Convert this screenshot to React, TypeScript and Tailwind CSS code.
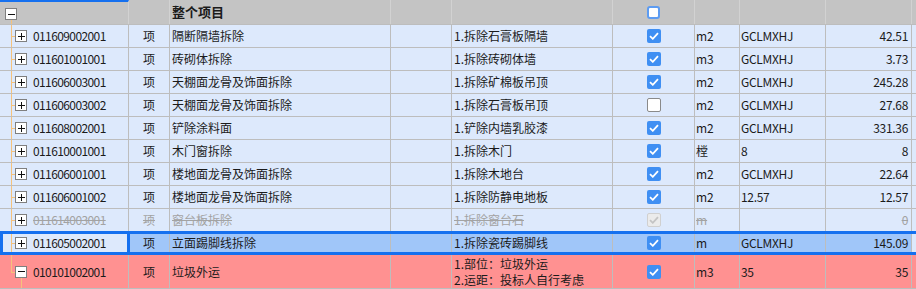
import React from "react";

type Row = {
  code: string;
  name: string;
  feat: string[];
  check: "on" | "off" | "disabled";
  unit: string;
  expr: string;
  qty: string;
  kind?: "strike" | "selected" | "red";
};

const ROWS: Row[] = [
  { code: "011609002001", name: "隔断隔墙拆除", feat: ["1.拆除石膏板隔墙"], check: "on", unit: "m2", expr: "GCLMXHJ", qty: "42.51" },
  { code: "011601001001", name: "砖砌体拆除", feat: ["1.拆除砖砌体墙"], check: "on", unit: "m3", expr: "GCLMXHJ", qty: "3.73" },
  { code: "011606003001", name: "天棚面龙骨及饰面拆除", feat: ["1.拆除矿棉板吊顶"], check: "on", unit: "m2", expr: "GCLMXHJ", qty: "245.28" },
  { code: "011606003002", name: "天棚面龙骨及饰面拆除", feat: ["1.拆除石膏板吊顶"], check: "off", unit: "m2", expr: "GCLMXHJ", qty: "27.68" },
  { code: "011608002001", name: "铲除涂料面", feat: ["1.铲除内墙乳胶漆"], check: "on", unit: "m2", expr: "GCLMXHJ", qty: "331.36" },
  { code: "011610001001", name: "木门窗拆除", feat: ["1.拆除木门"], check: "on", unit: "樘", expr: "8", qty: "8" },
  { code: "011606001001", name: "楼地面龙骨及饰面拆除", feat: ["1.拆除木地台"], check: "on", unit: "m2", expr: "GCLMXHJ", qty: "22.64" },
  { code: "011606001002", name: "楼地面龙骨及饰面拆除", feat: ["1.拆除防静电地板"], check: "on", unit: "m2", expr: "12.57", qty: "12.57" },
  { code: "011614003001", name: "窗台板拆除", feat: ["1.拆除窗台石"], check: "disabled", unit: "m", expr: "", qty: "0", kind: "strike" },
  { code: "011605002001", name: "立面踢脚线拆除", feat: ["1.拆除瓷砖踢脚线"], check: "on", unit: "m", expr: "GCLMXHJ", qty: "145.09", kind: "selected" },
  { code: "010101002001", name: "垃圾外运", feat: ["1.部位：垃圾外运", "2.运距：投标人自行考虑"], check: "on", unit: "m3", expr: "35", qty: "35", kind: "red" },
];

const GRID =
  "grid grid-cols-[129px_41px_221px_61px_161px_82px_45px_86px_86px_1fr]";
const FONT = "font-['Noto_Sans_CJK_SC','Noto_Sans',sans-serif]";

function ToggleBox({ open }: { open: boolean }) {
  return (
    <span className="relative z-10 flex h-3 w-3 shrink-0 items-center justify-center border border-[#7f7f7f] bg-white">
      <span className="absolute h-px w-[7px] bg-[#111]" />
      {!open && <span className="absolute h-[7px] w-px bg-[#111]" />}
    </span>
  );
}

function Check({ state }: { state: Row["check"] | "header" }) {
  if (state === "header")
    return <span className="h-[13px] w-[13px] rounded-[3px] border-2 border-[#5d9cf2] bg-white" />;
  if (state === "off")
    return <span className="h-[14px] w-[14px] rounded-[2px] border border-[#8a8a8a] bg-white" />;
  const disabled = state === "disabled";
  return (
    <span
      className={
        "flex h-[14px] w-[14px] items-center justify-center rounded-[2px] " +
        (disabled ? "border border-[#d0d0d0] bg-[#ebebeb]" : "bg-[#3f8ff3]")
      }
    >
      <svg width="10" height="8" viewBox="0 0 10 8">
        <path
          d="M1 4.2 L3.8 6.8 L9 1.2"
          fill="none"
          stroke={disabled ? "#c4c4c4" : "#fff"}
          strokeWidth="1.8"
        />
      </svg>
    </span>
  );
}

function Cell({
  children,
  className = "",
}: {
  children?: React.ReactNode;
  className?: string;
}) {
  return (
    <div className={"flex items-center border-r border-[#bdbdbd] " + className}>
      {children}
    </div>
  );
}

function DataRow({ r, last }: { r: Row; last: boolean }) {
  const bg =
    r.kind === "red" ? "bg-[#ff9191]" : r.kind === "selected" ? "bg-[#a0c6f9]" : "bg-[#dde9fc]";
  const txt = r.kind === "strike" ? "text-[#a3a3a3] line-through" : "text-[#1b1b1b]";
  const h = r.kind === "red" ? "h-[34px]" : "h-[23px]";
  const col1Bg = r.kind === "red" ? "bg-[#ff9191]" : "bg-[#dde9fc]";
  return (
    <div className={GRID + " relative border-b border-[#bdbdbd] leading-[16px] " + h + " " + txt}>
      <Cell className={"relative pl-[15px] " + col1Bg}>
        {/* tree connectors */}
        <span className={"absolute left-[11px] top-0 w-px bg-[#f5c27c] " + (last ? "h-1/2" : "h-full")} />
        <span className="absolute left-[11px] top-1/2 h-px w-1 bg-[#f5c27c]" />
        {last && <span className="absolute bottom-0 left-[21px] top-[22px] w-px bg-[#f5c27c]" />}
        <ToggleBox open={last} />
        <span className="ml-[6px] tracking-[-0.6px]">{r.code}</span>
      </Cell>
      <Cell className={"justify-center " + bg}>项</Cell>
      <Cell className={"pl-[2px] " + bg}>{r.name}</Cell>
      <Cell className={bg} />
      <Cell className={"pl-[2px] " + bg}>
        <div className="flex flex-col">
          {r.feat.map((f) => (
            <span key={f}>{f}</span>
          ))}
        </div>
      </Cell>
      <Cell className={"justify-center " + bg}>
        <Check state={r.check} />
      </Cell>
      <Cell className={"pl-[1px] " + bg}>{r.unit}</Cell>
      <Cell className={"pl-[1px] tracking-[-0.3px] " + bg}>{r.expr}</Cell>
      <Cell className={"justify-end pr-[3px] tracking-[-0.3px] " + bg}>{r.qty}</Cell>
      <div className={r.kind === "red" ? "bg-[#ff9191]" : "bg-[#dde9fc]"} />
      {r.kind === "selected" && (
        <>
          <div className="pointer-events-none absolute -top-px bottom-[-1px] left-0 right-0 border-y-[3px] border-[#1570ef]" />
          <div className="pointer-events-none absolute -top-px bottom-[-1px] left-0 w-[130px] border-x-[3px] border-[#1570ef]" />
        </>
      )}
    </div>
  );
}

export default function App() {
  return (
    <div className={"h-[289px] w-[916px] overflow-hidden bg-[#dde9fc] text-[12px] " + FONT}>
      {/* header */}
      <div className={GRID + " h-[25px] border-b border-[#bdbdbd] bg-[#c4c4c4] text-[#1b1b1b]"}>
        <div className="relative flex items-start border-r border-t-2 border-[#d2d2d2] border-t-[#1570ef] pl-[5px] pt-[6px]">
          <ToggleBox open />
          <span className="absolute left-[11px] top-[18px] bottom-0 w-px bg-[#f5c27c]" />
        </div>
        <div className="border-r border-[#d2d2d2]" />
        <div className="flex items-center border-r border-[#d2d2d2] pl-[2px] text-[13px] font-bold">
          整个项目
        </div>
        <div className="border-r border-[#d2d2d2]" />
        <div className="border-r border-[#d2d2d2]" />
        <div className="flex items-center justify-center border-r border-[#d2d2d2]">
          <Check state="header" />
        </div>
        <div className="border-r border-[#d2d2d2]" />
        <div className="border-r border-[#d2d2d2]" />
        <div className="border-r border-[#d2d2d2]" />
        <div />
      </div>
      {ROWS.map((r, i) => (
        <DataRow key={r.code} r={r} last={i === ROWS.length - 1} />
      ))}
    </div>
  );
}
